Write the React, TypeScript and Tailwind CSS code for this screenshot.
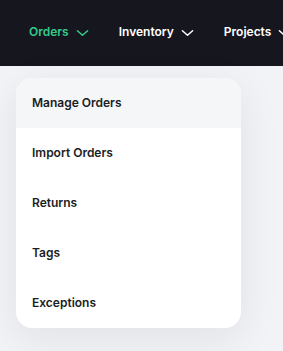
import { useState } from 'react';

function Chevron({ className }: { className?: string }) {
  return (
    <svg viewBox="0 0 14 8" className={className} fill="none" stroke="currentColor" strokeWidth="1.6" strokeLinecap="round" strokeLinejoin="round">
      <path d="M1.5 1.5 7 6.5l5.5-5" />
    </svg>
  );
}

export default function App() {
  const [active] = useState('Manage Orders');

  const navItems = [
    { name: 'Orders', open: true },
    { name: 'Inventory', open: false },
    { name: 'Projects', open: false },
  ];

  const menuItems = ['Manage Orders', 'Import Orders', 'Returns', 'Tags', 'Exceptions'];

  return (
    <div className="min-h-[351px] w-full bg-[#f2f3f6] font-['Inter',sans-serif] overflow-hidden">
      {/* Top bar */}
      <header className="h-[66px] bg-[#15161e] flex items-center pl-[29px] pb-[2px] gap-[30px] whitespace-nowrap">
        {navItems.map((item) => (
          <div
            key={item.name}
            className={`flex items-center gap-[7px] text-[12px] font-semibold ${item.open ? 'text-[#34c98a]' : 'text-white'}`}
          >
            {item.name}
            <Chevron className="w-[13px] h-[8px] mt-[2px]" />
          </div>
        ))}
      </header>

      {/* Dropdown */}
      <div className="pl-4 pt-3">
        <div className="w-[225px] bg-white rounded-2xl overflow-hidden shadow-[0_10px_40px_rgba(15,23,42,0.08)]">
          {menuItems.map((item) => (
            <div
              key={item}
              className={`h-[50px] flex items-center pl-4 text-[12px] font-semibold text-[#1b1d24] ${item === active ? 'bg-[#f5f6f8]' : ''}`}
            >
              {item}
            </div>
          ))}
        </div>
      </div>
    </div>
  );
}
